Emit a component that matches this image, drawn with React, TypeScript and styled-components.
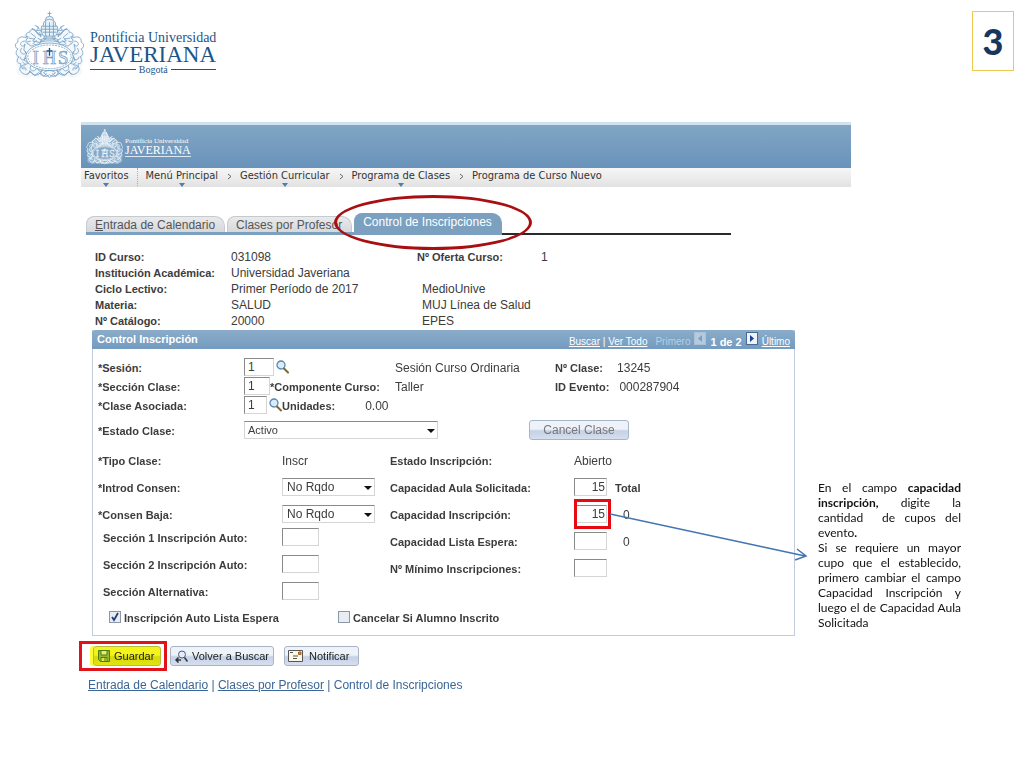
import React from "react";
import styled, { createGlobalStyle, css } from "styled-components";

const GlobalStyle = createGlobalStyle`
  *, *::before, *::after { box-sizing: border-box; }
  body {
    margin: 0;
    background: #fff;
    color: #3c3c3c;
    font: 12px/16px "Liberation Sans", Arial, sans-serif;
  }
  input, select, button { font: inherit; color: inherit; margin: 0; }
`;

/* ---------- slide frame ---------- */

const Slide = styled.div`
  min-height: 100vh;
  overflow-x: hidden;
`;

const SlideHeader = styled.header`
  display: flex;
  justify-content: space-between;
  align-items: flex-start;
  padding: 11px 10px 0 14px;
  height: 122px;
`;

const PageNumber = styled.div`
  width: 42px;
  height: 60px;
  border: 1px solid #efc94f;
  color: #17365d;
  font: 900 36px/58px Lato, sans-serif;
  text-align: center;
`;

/* ---------- university logo ---------- */

const LogoBox = styled.div<{ $small?: boolean }>`
  display: flex;
  align-items: center;
  gap: ${(p) => (p.$small ? 2 : 6)}px;
  color: ${(p) => (p.$small ? "#fff" : "#1c5588")};
  font-family: "Liberation Serif", "Times New Roman", serif;
  white-space: nowrap;
`;

const LogoText = styled.div<{ $small?: boolean }>`
  display: flex;
  flex-direction: column;
  padding-top: ${(p) => (p.$small ? 0 : 13)}px;
`;

const LogoOver = styled.span<{ $small?: boolean }>`
  font-size: ${(p) => (p.$small ? 7 : 14)}px;
  line-height: ${(p) => (p.$small ? 8 : 14)}px;
`;

const LogoName = styled.span<{ $small?: boolean }>`
  font-size: ${(p) => (p.$small ? 12 : 23)}px;
  line-height: ${(p) => (p.$small ? 11 : 20)}px;
  ${(p) => p.$small && css`border-bottom: 1px solid #dce8f2;`}
`;

const LogoCity = styled.span`
  display: flex;
  align-items: center;
  gap: 3px;
  font-size: 10px;
  line-height: 9px;
  &::before, &::after {
    content: "";
    flex: 1;
    height: 1px;
    background: #1c5588;
  }
`;

function Crest({ width, height, light }: { width: number; height: number; light?: boolean }) {
  const line = light ? "#eef5fa" : "#6c9ac2";
  const fill = light ? "#b9d0e2" : "#e6f0f7";
  const side = light ? "#94b5d0" : "#f4f8fb";
  const half = (
    <g>
      <path d="M33 24c-4-4-8-7-12-5-3-3-7-1-6 2-5-1-7 4-3 7-4 2-4 5-1 7-5-2-8 2-6 5-4 2-4 6-1 8-3 2-3 6 0 8-3 3-2 9 4 9 3 3 8 3 10 0 3 3 9 3 11 0 2 1 4 2 7 2V24z" fill={side} stroke="none" />
      <path d="M33 24c-4-4-8-6-11-4-2-3-6-2-6 1-4 0-5 4-2 6-3 2-2 6 1 6 1 3 5 2 6 0 3 2 6 0 6-3 3 1 6-2 6-6z" />
      <path d="M17 22l5 4-3 4 6 1M22 20l3 4 5-1M15 27l6 1M24 27l5 3M19 33l4-4M12 25l3 1M13 31l4-1M26 21l1 5" />
      <path d="M13 27c-6-3-10 0-9 4-4 2-3 6 0 7-3 3-2 7 1 8-3 3-2 7 2 7-1 3 1 6 4 5" />
      <path d="M11 30c-3 0-5 2-4 4s4 1 4-1M8 37c-2 2-2 5 1 6s4-2 2-3M6 46c1 4 5 4 6 1M9 51c1 3 4 3 6 1M11 33l-1 6 3 4-3 6 5 4" />
      <path d="M12 54c-6 0-8 5-4 8 3 3 8 2 8-2 2 5 8 6 11 2 2 4 6 5 9 2" />
      <path d="M8 57c2-2 5 0 4 3M17 55c-2 4 2 7 5 4s-1-6-3-3M24 57c0 4 4 5 6 2M29 55l-2 8M13 64l4-3 4 4 4-3 5 4 3-3" />
      <path d="M28 25l-7-6M31 23l-8-8M21 14l4 2-2 3M18 17l4 2" />
    </g>
  );
  return (
    <svg width={width} height={height} viewBox="0 0 71 69" fill="none" stroke={line} strokeWidth={light ? 1.5 : 0.8} aria-hidden="true">
      {half}
      <g transform="translate(72 0) scale(-1 1)">{half}</g>
      <path d="M36 0v5M34 2h4" />
      <ellipse cx="36" cy="8" rx="4" ry="3" fill={fill} />
      <path d="M30 14c-1-4 3-6 6-6s7 2 6 6l2 1c1 4 0 8-2 10H30c-2-2-3-6-2-10z" fill={fill} />
      <path d="M29 15h14M28 18h16M29 21h14M31 25l-1 3h12l-1-3M32 10v15M36 11v14M40 10v15" />
      <ellipse cx="36" cy="46" rx="24" ry="14" fill={light ? "#84a9c9" : "#fff"} />
      <ellipse cx="36" cy="46" rx="22" ry="12" strokeDasharray="2 1" />
      <path d="M27 29c4-3 14-3 18 0M24 32c7-3 17-3 24 0M30 62c4-3 8-3 12 0l-6 5z" />
      <g fontFamily="Liberation Serif, serif" fontSize="19" textAnchor="middle" fill={fill} strokeWidth="0.7">
        <text x="22" y="53">I</text>
        <text x="36" y="53">H</text>
        <text x="50" y="53">S</text>
      </g>
      <path d="M36 37v8M33 40h6" stroke={light ? "#fff" : "#1c4f80"} strokeWidth="1.4" />
    </svg>
  );
}

function Logo({ small }: { small?: boolean }) {
  return (
    <LogoBox $small={small}>
      <Crest width={small ? 37 : 70} height={small ? 36 : 69} light={small} />
      <LogoText $small={small}>
        <LogoOver $small={small}>Pontificia Universidad</LogoOver>
        <LogoName $small={small}>JAVERIANA</LogoName>
        {!small && <LogoCity>Bogotá</LogoCity>}
      </LogoText>
    </LogoBox>
  );
}

/* ---------- application banner ---------- */

const Screen = styled.main`
  padding-left: 81px;
`;

const Banner = styled.div`
  margin-right: 173px;
  height: 46px;
  padding: 4px 5px 0;
  border-top: 3px solid #cfe3ee;
  background: linear-gradient(#80a6c4, #6a93bb);
`;

const Breadcrumb = styled.nav`
  display: flex;
  align-items: flex-start;
  margin-right: 173px;
  height: 19px;
  padding-left: 3px;
  background: linear-gradient(#f6f6f6, #e2e2e2);
  font: 11px/16px "DejaVu Sans Condensed", "Noto Sans", sans-serif;
  white-space: nowrap;
`;

const Crumb = styled.a<{ $menu?: boolean }>`
  position: relative;
  color: #333;
  text-decoration: none;
  ${(p) =>
    p.$menu &&
    css`
      &::after {
        content: "";
        position: absolute;
        left: calc(50% - 3px);
        top: 15px;
        border: 3px solid transparent;
        border-top: 4px solid #4c7fae;
        border-bottom: 0;
      }
    `}
`;

const CrumbSep = styled.svg`
  width: 5px;
  height: 7px;
  margin: 5px 8px 0 9px;
`;

const CrumbRule = styled.span`
  height: 18px;
  margin: 0 8px;
  border-left: 1px dotted #aaa;
`;

const Sep = () => (
  <CrumbSep viewBox="0 0 5 7" fill="none" stroke="#666" aria-hidden="true">
    <path d="M1 1l3 2.5L1 6" />
  </CrumbSep>
);

/* ---------- tabs ---------- */

const Tabs = styled.div`
  display: flex;
  align-items: flex-end;
  width: 645px;
  height: 48px;
  margin-left: 5px;
`;

const TabStrip = styled.div`
  display: flex;
  align-items: flex-end;
  gap: 2px;
  border-bottom: 3px solid #7ba0c0;
`;

const TabRule = styled.div`
  flex: 1;
  height: 2px;
  background: #2a2a2a;
`;

const Tab = styled.a<{ $active?: boolean }>`
  position: relative;
  height: 16px;
  padding: 0 9px 0 8px;
  border: 1px solid #c6c9ce;
  border-bottom: 0;
  border-radius: 8px 10px 0 0;
  background: linear-gradient(#e9eaec, #d6d8dc);
  color: #555;
  text-decoration: none;
  white-space: nowrap;
  ${(p) =>
    p.$active &&
    css`
      height: 19px;
      border-color: #7ba0c0;
      background: #7ba0c0;
      color: #fff;
    `}
`;

const Ring = styled.span`
  position: absolute;
  left: -21px;
  top: -19px;
  width: 198px;
  height: 55px;
  border: 3px solid #a80f12;
  border-radius: 50%;
`;

/* ---------- course summary ---------- */

const Body = styled.div`
  display: flex;
  align-items: flex-start;
  padding: 14px 63px 0 0;
`;

const FormColumn = styled.div`
  flex: 1;
  min-width: 0;
`;

const Summary = styled.dl`
  display: grid;
  grid-template-columns: 136px 186px 124px 1fr;
  grid-auto-rows: 16px;
  margin: 0 0 0 14px;
  white-space: nowrap;
`;

const Term = styled.dt<{ $col?: number }>`
  grid-column: ${(p) => p.$col ?? 1};
  font-size: 11px;
  font-weight: 700;
`;

const Value = styled.dd<{ $col?: number }>`
  grid-column: ${(p) => p.$col ?? 2};
  margin: 0;
`;

const DescValue = styled(Value)`
  padding-left: 5px;
`;

/* ---------- enrollment panel ---------- */

const Panel = styled.section`
  margin: 1px 0 0 11px;
  border: 1px solid #c3ccdb;
  border-top: 0;
  padding-bottom: 9px;
`;

const PanelHead = styled.div`
  display: flex;
  justify-content: space-between;
  height: 19px;
  margin: 0 -1px;
  padding: 0 5px;
  border-radius: 3px 3px 0 0;
  background: linear-gradient(#8aacc9, #749bc0);
  color: #fff;
  white-space: nowrap;
`;

const PanelTitle = styled.h2`
  margin: 0;
  font-size: 11px;
  line-height: 19px;
`;

const Pager = styled.div`
  display: flex;
  align-items: center;
  gap: 4px;
  padding-top: 5px;
  font-size: 10px;
  line-height: 14px;
  a { color: #fff; }
  b { font-size: 11px; }
`;

const PagerStart = styled.span`
  margin: 0 0 0 4px;
  color: #b9cfe1;
`;

const PageStep = styled.button<{ $off?: boolean }>`
  width: 12px;
  height: 13px;
  padding: 0;
  margin-top: -7px;
  border: 1px solid ${(p) => (p.$off ? "#a9c2d8" : "#46699a")};
  background: ${(p) => (p.$off ? "#b4cadd" : "#eef3fa")};
  svg { display: block; margin: 0 auto; }
`;

const PanelBody = styled.div`
  padding: 8px 5px 0;
  white-space: nowrap;
`;

const ClassRow = styled.div`
  display: grid;
  grid-template-columns: 146px 151px 160px auto 1fr;
  align-items: center;
  height: 19px;
`;

const captionText = css`
  padding-top: 2px;
  font-size: 11px;
  font-weight: 700;
`;

const Label = styled.label<{ $indent?: boolean }>`
  ${captionText}
  padding-left: ${(p) => (p.$indent ? 5 : 0)}px;
`;

const Caption = styled.span`
  ${captionText}
`;

const Datum = styled.span<{ $gap?: number }>`
  padding: 3px 0 0 ${(p) => p.$gap ?? 0}px;
`;

const Controls = styled.span`
  display: flex;
  align-items: center;
`;

const TextBox = styled.input<{ $w: number }>`
  width: ${(p) => p.$w}px;
  height: 18px;
  padding: 0 3px;
  border: 1px solid #d5d5d5;
  border-top-color: #8a8a8a;
  border-left-color: #8a8a8a;
  background: #fff;
  outline: 0;
`;

const NumberBox = styled(TextBox)`
  padding: 0 1px;
  text-align: right;
`;

const Lookup = styled.button`
  display: flex;
  padding: 0 0 0 2px;
  border: 0;
  background: none;
`;

const Lens = () => (
  <svg width="13" height="14" viewBox="0 0 13 14" fill="none" aria-hidden="true">
    <circle cx="5" cy="5" r="4" fill="#d9ecfa" stroke="#5b86b0" strokeWidth="1.3" />
    <path d="M8 8.500l4 4" stroke="#7a6a3a" strokeWidth="2" strokeLinecap="round" />
  </svg>
);

const SelectWrap = styled.span<{ $w: number }>`
  position: relative;
  display: inline-block;
  width: ${(p) => p.$w}px;
  height: 18px;
  &::after {
    content: "";
    position: absolute;
    right: 3px;
    top: 8px;
    border: 4px solid transparent;
    border-top: 4px solid #111;
    border-bottom: 0;
    pointer-events: none;
  }
`;

const Select = styled.select`
  display: block;
  appearance: none;
  width: 100%;
  height: 18px;
  padding: 0 4px;
  border: 1px solid #d5d5d5;
  border-top-color: #8a8a8a;
  border-radius: 0;
  background: #fff;
  font-size: 11px;
`;

const WideSelect = styled(Select)`
  padding: 0 3px;
`;

const ConsentSelect = styled(Select)`
  font-size: 12px;
`;

const StatusRow = styled.div`
  display: grid;
  grid-template-columns: 146px 285px 1fr;
  align-items: center;
  height: 32px;
`;

const SoftButton = styled.button`
  display: inline-flex;
  align-items: center;
  gap: 4px;
  height: 20px;
  padding: 0 4px 0 4px;
  border: 1px solid #a9b4c8;
  border-radius: 3px;
  background: linear-gradient(#eef2f9 0 45%, #c5d1e6 55%, #d6dfee);
  color: #222;
  font-size: 11px;
  white-space: nowrap;
`;

const CancelButton = styled(SoftButton)`
  justify-content: center;
  justify-self: start;
  width: 100px;
  padding: 0;
  color: #777;
  font-size: 12px;
`;

const NotifyButton = styled(SoftButton)`
  gap: 6px;
  padding: 0 9px 0 3px;
`;

const Halves = styled.div`
  display: grid;
  grid-template-columns: 292px 1fr;
  align-items: start;
`;

const Field = styled.div`
  display: grid;
  grid-template-columns: 184px auto 1fr;
  align-items: center;
  height: 27px;
`;

const FieldGroup = styled.div`
  margin-top: -4px;
`;

const Aside = styled(Caption)`
  padding-left: 8px;
`;

const Marked = styled.span`
  position: relative;
  display: flex;
  &::before {
    content: "";
    position: absolute;
    inset: -6px -4px -6px 0;
    border: 3px solid #e60b12;
    pointer-events: none;
  }
`;

const Arrow = styled.svg`
  position: absolute;
  left: 36px;
  top: 7px;
  width: 200px;
  height: 52px;
  z-index: 1;
  pointer-events: none;
`;

const Checks = styled.div`
  display: grid;
  grid-template-columns: 229px 1fr;
  padding: 6px 0 0 11px;
`;

const CheckLabel = styled.label`
  display: flex;
  align-items: center;
  gap: 3px;
  font-size: 11px;
  font-weight: 700;
`;

const CheckBox = styled.input`
  appearance: none;
  width: 12px;
  height: 12px;
  border: 1px solid #8c97a6;
  background: #e9edf2;
`;

const CheckCell = styled.span`
  position: relative;
  display: flex;
  margin-bottom: 3px;
  svg { position: absolute; left: 2px; top: 1px; pointer-events: none; }
`;

/* ---------- footer ---------- */

const Actions = styled.div`
  display: flex;
  align-items: center;
  gap: 10px;
  height: 30px;
  margin: 5px 0 0 -2px;
`;

const SaveFrame = styled.div`
  height: 30px;
  width: 88px;
  margin-right: -7px;
  padding: 2px 0 0 11px;
  border: 3px solid #e01319;
`;

const SaveButton = styled(SoftButton)`
  padding: 0 6px 0 4px;
  border-color: #b9bb3a;
  background: linear-gradient(#f3f41c 0 45%, #d5d80a 55%, #e2e512);
  box-shadow: -3px 0 0 #fbfb3c;
`;

const FootLinks = styled.nav`
  padding: 6px 0 0 7px;
  color: #3a6797;
  a { color: #3a6797; }
`;

const Note = styled.aside`
  width: 143px;
  margin: 231px 0 0 23px;
  color: #111;
  font: 12px/15px Lato, sans-serif;
  text-align: justify;
  p { margin: 0; }
`;

function ClassPanel() {
  return (
    <Panel>
      <PanelHead>
        <PanelTitle>Control Inscripción</PanelTitle>
        <Pager>
          <span><a href="#buscar">Buscar</a> | <a href="#todo">Ver Todo</a></span>
          <PagerStart>Primero</PagerStart>
          <PageStep $off aria-label="Anterior">
            <svg width="8" height="9" viewBox="0 0 8 9" fill="#7da0c2"><path d="M6 1v7L2 4.500z" /></svg>
          </PageStep>
          <b>1 de 2</b>
          <PageStep aria-label="Siguiente">
            <svg width="8" height="9" viewBox="0 0 8 9" fill="#1c3c8c"><path d="M2 1v7l4-3.500z" /></svg>
          </PageStep>
          <a href="#ultimo">Último</a>
        </Pager>
      </PanelHead>
      <PanelBody>
        <ClassRow>
          <Label htmlFor="sesion">*Sesión:</Label>
          <Controls>
            <TextBox id="sesion" $w={30} defaultValue="1" autoFocus />
            <Lookup aria-label="Buscar sesión"><Lens /></Lookup>
          </Controls>
          <Datum>Sesión Curso Ordinaria</Datum>
          <Caption>Nº Clase:</Caption>
          <Datum $gap={14}>13245</Datum>
        </ClassRow>
        <ClassRow>
          <Label htmlFor="seccion">*Sección Clase:</Label>
          <Controls>
            <TextBox id="seccion" $w={26} defaultValue="1" />
            <Caption>*Componente Curso:</Caption>
          </Controls>
          <Datum>Taller</Datum>
          <Caption>ID Evento:</Caption>
          <Datum $gap={10}>000287904</Datum>
        </ClassRow>
        <ClassRow>
          <Label htmlFor="asociada">*Clase Asociada:</Label>
          <Controls>
            <TextBox id="asociada" $w={23} defaultValue="1" />
            <Lookup aria-label="Buscar clase"><Lens /></Lookup>
            <Caption>Unidades:</Caption>
            <Datum $gap={30}>0.00</Datum>
          </Controls>
        </ClassRow>
        <StatusRow>
          <Label htmlFor="estado">*Estado Clase:</Label>
          <SelectWrap $w={194}>
            <WideSelect id="estado"><option>Activo</option></WideSelect>
          </SelectWrap>
          <CancelButton>Cancel Clase</CancelButton>
        </StatusRow>
        <Halves>
          <div>
            <Field><Caption>*Tipo Clase:</Caption><Datum>Inscr</Datum></Field>
            <Field>
              <Label htmlFor="introd">*Introd Consen:</Label>
              <SelectWrap $w={93}><ConsentSelect id="introd"><option>No Rqdo</option></ConsentSelect></SelectWrap>
            </Field>
            <Field>
              <Label htmlFor="baja">*Consen Baja:</Label>
              <SelectWrap $w={93}><ConsentSelect id="baja"><option>No Rqdo</option></ConsentSelect></SelectWrap>
            </Field>
            <FieldGroup>
              <Field><Label $indent htmlFor="s1">Sección 1 Inscripción Auto:</Label><TextBox id="s1" $w={37} /></Field>
              <Field><Label $indent htmlFor="s2">Sección 2 Inscripción Auto:</Label><TextBox id="s2" $w={37} /></Field>
              <Field><Label $indent htmlFor="alt">Sección Alternativa:</Label><TextBox id="alt" $w={37} /></Field>
            </FieldGroup>
          </div>
          <div>
            <Field><Caption>Estado Inscripción:</Caption><Datum>Abierto</Datum></Field>
            <Field>
              <Label htmlFor="aula">Capacidad Aula Solicitada:</Label>
              <NumberBox id="aula" $w={33} defaultValue="15" />
              <Aside>Total</Aside>
            </Field>
            <Field>
              <Label htmlFor="cap">Capacidad Inscripción:</Label>
              <Marked>
                <NumberBox id="cap" $w={33} defaultValue="15" />
                <Arrow viewBox="0 0 200 52" fill="none" stroke="#4374b3" strokeWidth="1.5" aria-hidden="true">
                  <path d="M0 2l195 42M187 37l9 7-11 4" />
                </Arrow>
              </Marked>
              <Datum $gap={16}>0</Datum>
            </Field>
            <Field>
              <Label htmlFor="espera">Capacidad Lista Espera:</Label>
              <NumberBox id="espera" $w={33} />
              <Datum $gap={16}>0</Datum>
            </Field>
            <Field>
              <Label htmlFor="minimo">Nº Mínimo Inscripciones:</Label>
              <NumberBox id="minimo" $w={33} />
            </Field>
          </div>
        </Halves>
        <Checks>
          <CheckLabel>
            <CheckCell>
              <CheckBox type="checkbox" defaultChecked />
              <svg width="9" height="10" viewBox="0 0 9 10" fill="none" stroke="#23407c" strokeWidth="1.8"><path d="M1 5l2 3 4-7" /></svg>
            </CheckCell>
            Inscripción Auto Lista Espera
          </CheckLabel>
          <CheckLabel>
            <CheckCell><CheckBox type="checkbox" /></CheckCell>
            Cancelar Si Alumno Inscrito
          </CheckLabel>
        </Checks>
      </PanelBody>
    </Panel>
  );
}

export default function App() {
  return (
    <Slide>
      <GlobalStyle />
      <SlideHeader>
        <Logo />
        <PageNumber>3</PageNumber>
      </SlideHeader>
      <Screen>
        <Banner><Logo small /></Banner>
        <Breadcrumb>
          <Crumb $menu href="#favoritos">Favoritos</Crumb>
          <CrumbRule />
          <Crumb $menu href="#menu">Menú Principal</Crumb>
          <Sep />
          <Crumb $menu href="#gestion">Gestión Curricular</Crumb>
          <Sep />
          <Crumb $menu href="#clases">Programa de Clases</Crumb>
          <Sep />
          <Crumb href="#nuevo">Programa de Curso Nuevo</Crumb>
        </Breadcrumb>
        <Tabs>
          <TabStrip>
            <Tab href="#calendario"><u>E</u>ntrada de Calendario</Tab>
            <Tab href="#profesor">Clases por Profesor</Tab>
            <Tab $active href="#control">Control de Inscripciones<Ring /></Tab>
          </TabStrip>
          <TabRule />
        </Tabs>
        <Body>
          <FormColumn>
            <Summary>
              <Term>ID Curso:</Term>
              <Value>031098</Value>
              <Term $col={3}>Nº Oferta Curso:</Term>
              <Value $col={4}>1</Value>
              <Term>Institución Académica:</Term>
              <Value>Universidad Javeriana</Value>
              <Term>Ciclo Lectivo:</Term>
              <Value>Primer Período de 2017</Value>
              <DescValue $col={3}>MedioUnive</DescValue>
              <Term>Materia:</Term>
              <Value>SALUD</Value>
              <DescValue $col={3}>MUJ Línea de Salud</DescValue>
              <Term>Nº Catálogo:</Term>
              <Value>20000</Value>
              <DescValue $col={3}>EPES</DescValue>
            </Summary>
            <ClassPanel />
            <Actions>
              <SaveFrame>
                <SaveButton>
                  <svg width="12" height="12" viewBox="0 0 12 12" fill="none" stroke="#4d7a1c" aria-hidden="true">
                    <path d="M.5.500h11v11h-9l-2-2z" fill="#9cb82a" />
                    <path d="M3 1v4h6V1" fill="#e6ef6a" />
                    <path d="M3 11V7.500h6V11M7 8v3" fill="#dbe84a" />
                  </svg>
                  Guardar
                </SaveButton>
              </SaveFrame>
              <SoftButton>
                <svg width="13" height="13" viewBox="0 0 13 13" fill="none" stroke="#333" aria-hidden="true">
                  <circle cx="7" cy="4.500" r="3.500" fill="#e3eefa" stroke="#4a5f80" />
                  <path d="M9.500 7.500l3 4" strokeWidth="1.5" />
                  <path d="M6 10H1M3.500 7.500L1 10l2.500 2.500" strokeWidth="1.5" />
                </svg>
                Volver a Buscar
              </SoftButton>
              <NotifyButton>
                <svg width="15" height="12" viewBox="0 0 15 12" fill="none" stroke="#555" aria-hidden="true">
                  <path d="M.5.500h14v11H.5z" fill="#fbf8e6" />
                  <path d="M2 2.500h3M5 6h5M5 8.500h4" />
                  <path d="M10.500 2h2.500v2.500h-2.500z" fill="#c9853a" stroke="#a0642a" />
                </svg>
                Notificar
              </NotifyButton>
            </Actions>
            <FootLinks>
              <a href="#calendario">Entrada de Calendario</a> | <a href="#profesor">Clases por Profesor</a> | Control de Inscripciones
            </FootLinks>
          </FormColumn>
          <Note>
            <p>
              En el campo <b>capacidad inscripción,</b> digite la cantidad &nbsp;de cupos del evento<b>.</b>
            </p>
            <p>
              Si se requiere un mayor cupo que el establecido, primero cambiar el campo Capacidad Inscripción y luego
              el de Capacidad Aula Solicitada
            </p>
          </Note>
        </Body>
      </Screen>
    </Slide>
  );
}
